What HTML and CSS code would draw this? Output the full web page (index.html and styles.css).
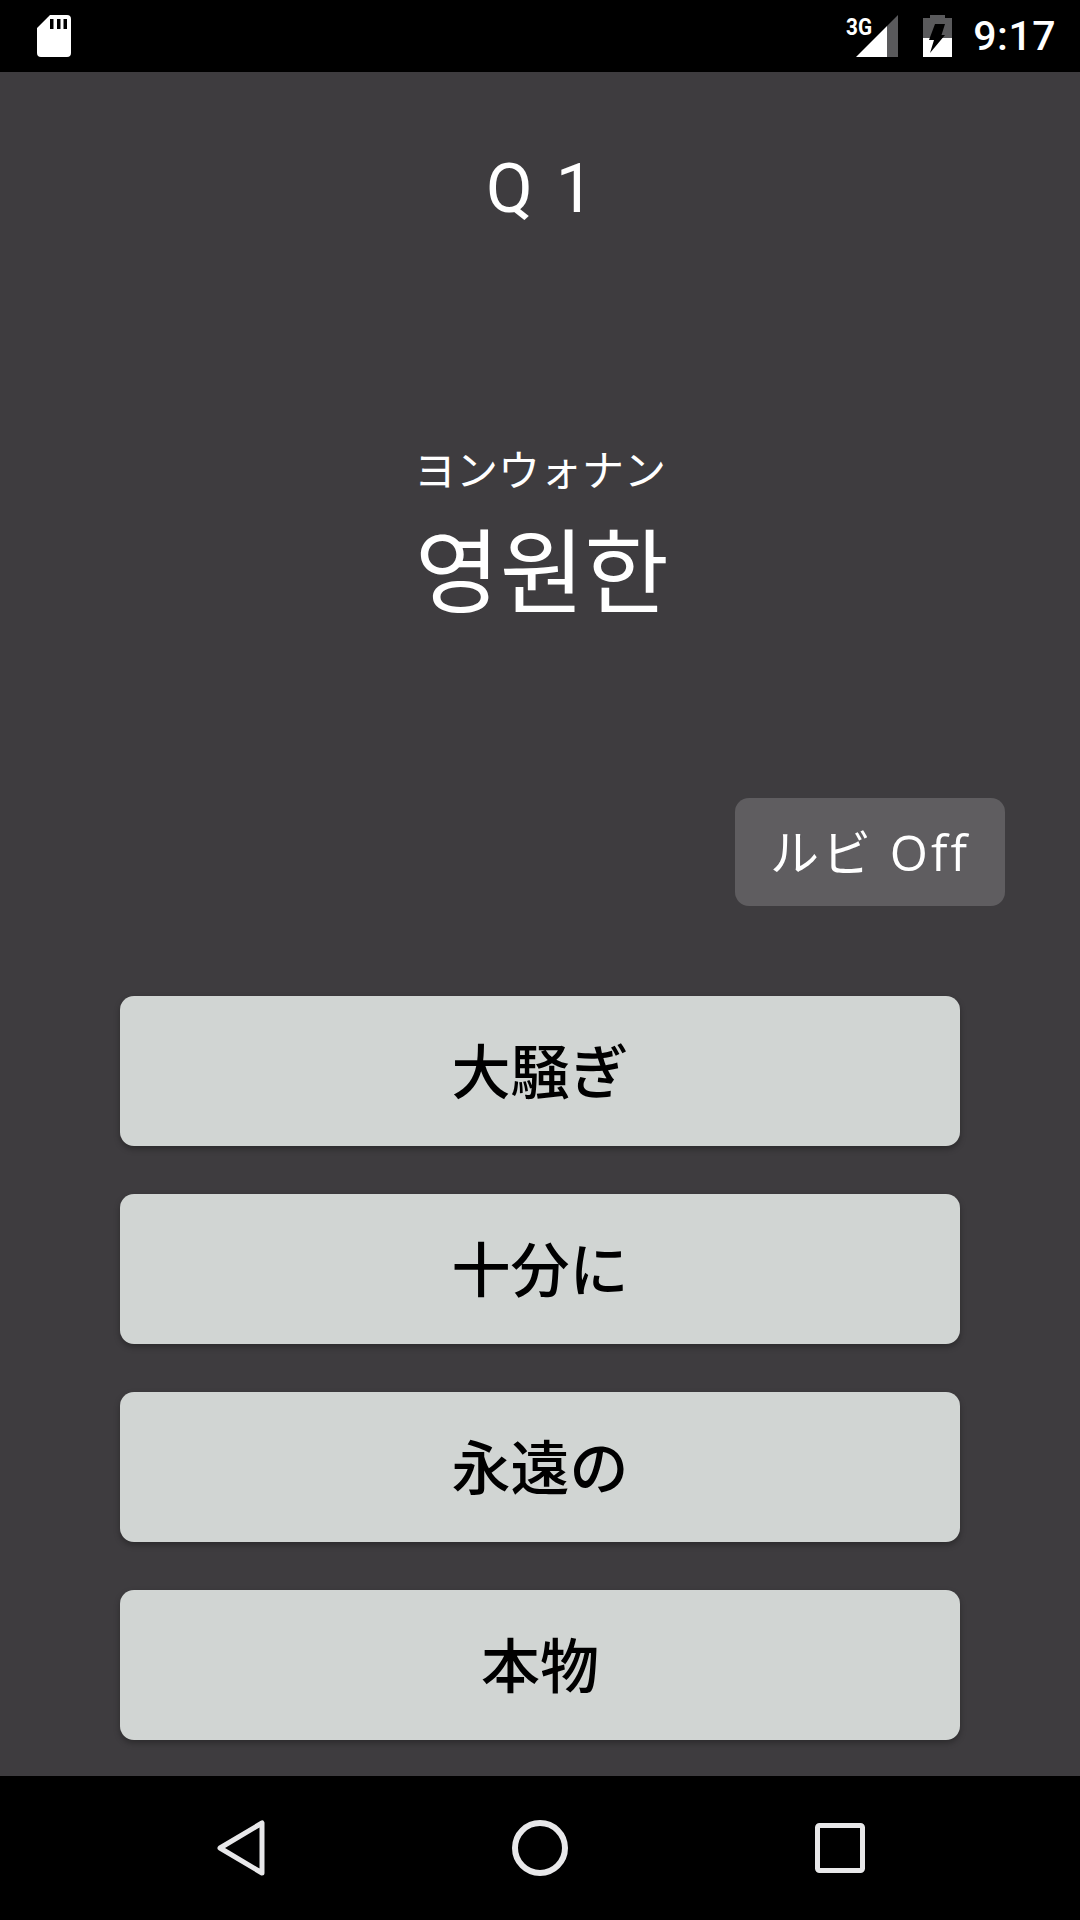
FILE: index.html
```html
<!DOCTYPE html>
<html lang="ja">
<head>
	<meta charset="utf-8">
	<title>Quiz</title>
	<link rel="stylesheet" href="styles.css">
</head>
<body>

<div class="status-bar">
	<svg class="sd-icon" width="36" height="44" viewBox="0 0 36 44">
		<path fill="#fff" fill-rule="evenodd" d="M14 1H31Q35 1 35 5V39Q35 43 31 43H5Q1 43 1 39V14ZM14 5V15H17.5V5ZM21 5V15H24.500V5ZM27.500 5V15H31V5Z"/>
	</svg>
	<div class="status-right">
		<div class="signal">
			<span class="net-label">3G</span>
			<svg width="42" height="42" viewBox="0 0 42 42">
				<path fill="#fff" d="M0 42L31 11V42Z"/>
				<path fill="#5a5a5c" d="M31 11L42 0V42H31Z"/>
			</svg>
		</div>
		<svg class="battery" width="29" height="42" viewBox="0 0 29 42">
			<path fill="#5a5a5c" d="M7 0H22V3H29V23H0V3H7Z"/>
			<path fill="#fff" d="M0 23H29V42H0Z"/>
			<path fill="#000" d="M12 9H22L18.500 20H22L7 38L11 25H6Z"/>
		</svg>
		<span class="clock">9:17</span>
	</div>
</div>

<div class="content">
	<div class="question-no">Q 1</div>
	<div class="ruby">ヨンウォナン</div>
	<div class="word">영원한</div>
	<div class="ruby-row">
		<button class="ruby-toggle">ルビ Off</button>
	</div>
	<div class="answers">
		<button class="answer">大騒ぎ</button>
		<button class="answer">十分に</button>
		<button class="answer">永遠の</button>
		<button class="answer">本物</button>
	</div>
</div>

<div class="nav-bar">
	<svg width="48" height="56" viewBox="0 0 48 56">
		<path fill="none" stroke="#e8e8ea" stroke-width="5" stroke-linejoin="round" d="M45 3V53L3 28Z"/>
	</svg>
	<svg width="56" height="56" viewBox="0 0 56 56">
		<circle cx="28" cy="28" r="25" fill="none" stroke="#e8e8ea" stroke-width="6"/>
	</svg>
	<svg width="50" height="50" viewBox="0 0 50 50">
		<rect x="2.500" y="2.500" width="45" height="45" rx="2" fill="none" stroke="#e8e8ea" stroke-width="5"/>
	</svg>
</div>

</body>
</html>
```

FILE: styles.css
```css
html, body { margin: 0; padding: 0; }
body { width: 1080px; height: 1920px; display: flex; flex-direction: column; background: #3e3c3f; color: #fff; font-family: Roboto, "Noto Sans CJK JP", sans-serif; overflow: hidden; }
button { font-family: "Open Sans", "Noto Sans CJK JP", sans-serif; border: 0; padding: 0; }

.status-bar { height: 72px; flex: none; background: #000; display: flex; align-items: center; justify-content: space-between; padding: 0 24px 0 36px; box-sizing: border-box; }
.status-right { display: flex; align-items: center; }
.signal { position: relative; width: 52px; height: 42px; margin-right: 25px; }
.signal svg { position: absolute; right: 0; top: 0; }
.net-label { position: absolute; left: 0; top: -2px; font-size: 23px; line-height: 30px; font-weight: 700; transform: scaleX(0.9); transform-origin: left; }
.battery { margin-right: 21px; }
.clock { font-size: 41px; font-weight: 500; letter-spacing: 0.5px; }

.content { flex: 1; display: flex; flex-direction: column; align-items: center; }
.question-no { margin-top: 77px; padding-left: 3px; font-size: 68px; line-height: 80px; letter-spacing: 3px; }
.ruby { margin-top: 211px; font-size: 42px; line-height: 56px; font-family: "Noto Sans CJK JP", sans-serif; font-weight: 400; }
.word { margin-top: 10px; padding-left: 4px; font-size: 92px; line-height: 120px; font-family: "Noto Sans CJK KR", sans-serif; font-weight: 400; }

.ruby-row { align-self: stretch; display: flex; justify-content: flex-end; margin-top: 172px; padding-right: 75px; }
.ruby-toggle { width: 270px; height: 108px; padding-bottom: 5px; background: #5f5d60; color: #fff; border-radius: 14px; font-size: 49px; letter-spacing: 3px; }

.answers { align-self: stretch; margin-top: 90px; padding: 0 120px; display: flex; flex-direction: column; gap: 48px; }
.answer { height: 150px; padding-bottom: 6px; background: #d1d5d3; color: #000; border-radius: 14px; font-size: 59px; font-weight: 500; box-shadow: 0 3px 6px rgba(0, 0, 0, 0.3); }

.nav-bar { height: 144px; flex: none; background: #000; display: grid; grid-template-columns: 48px 56px 50px; justify-content: center; column-gap: 247px; align-items: center; padding-left: 2px; }
```
